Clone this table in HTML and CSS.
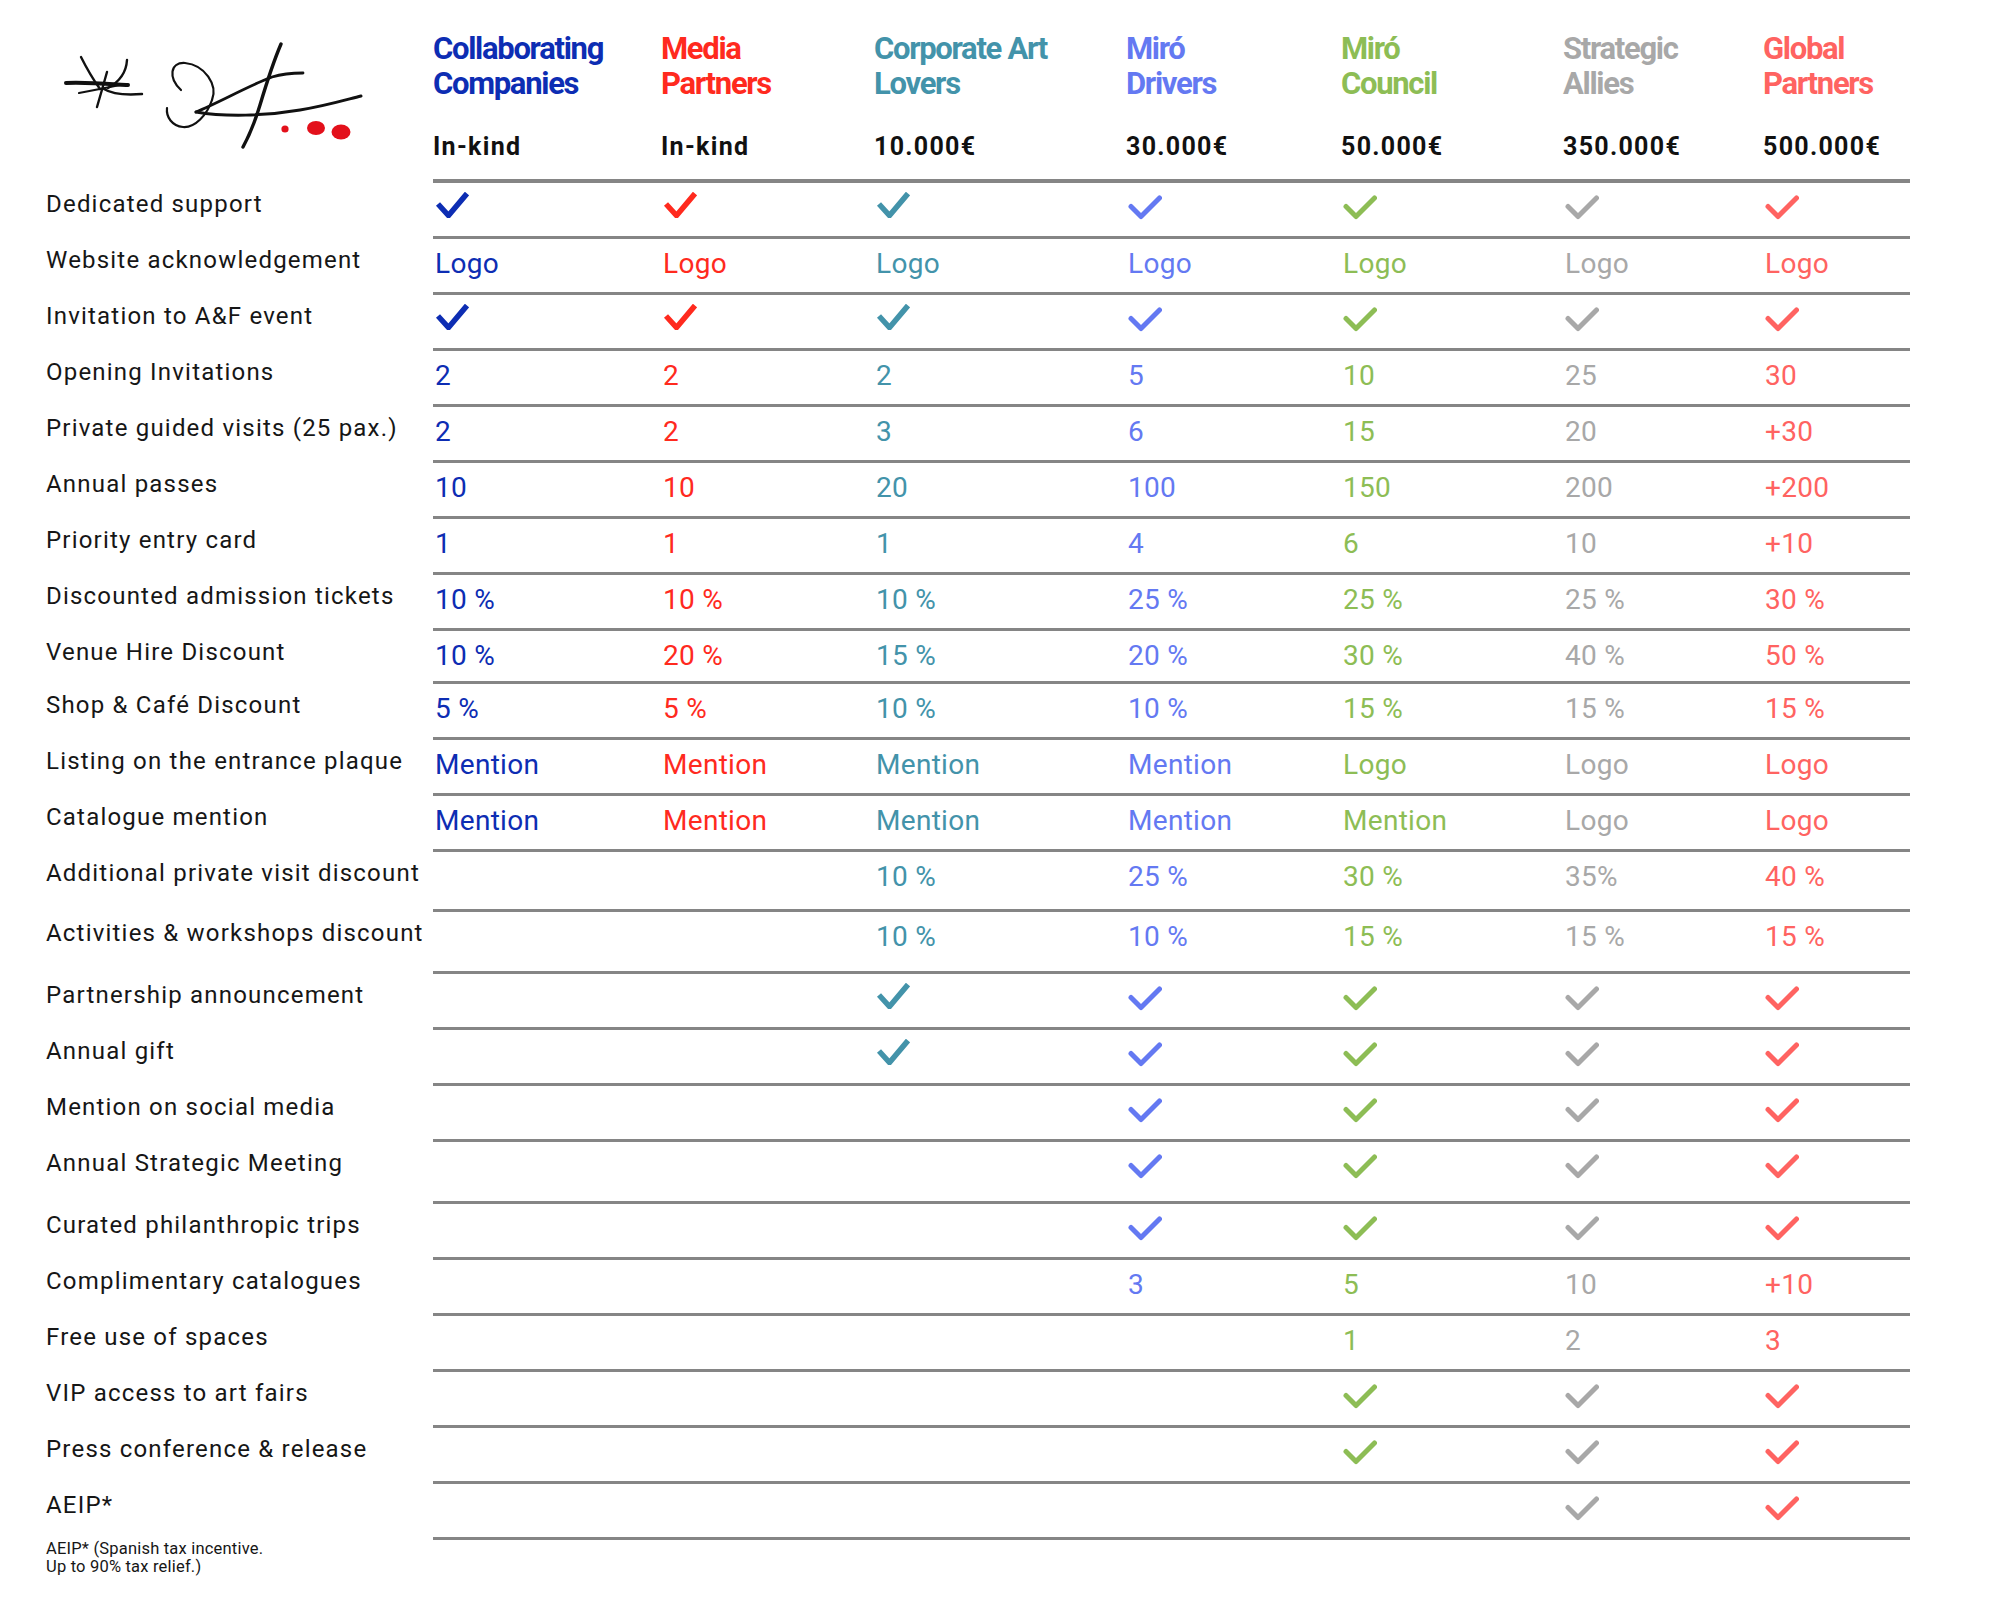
FILE: index.html
```html
<!DOCTYPE html>
<html lang="en">
<head>
<meta charset="utf-8">
<title>Partnership tiers</title>
<link rel="stylesheet" href="styles.css">
</head>
<body>
<svg class="sprite" xmlns="http://www.w3.org/2000/svg">
  <symbol id="chk-a" viewBox="0 0 34 26"><path d="M3 12 L13.5 23.5 L32 1.5"/></symbol>
  <symbol id="chk-b" viewBox="0 0 34 26"><path d="M3 12.5 L13 22.5 L31.5 4"/></symbol>
</svg>
<main class="sheet">
  <header class="head">
    <div class="brand">
      <svg class="brand__mark" width="330" height="130" viewBox="50 30 330 130" xmlns="http://www.w3.org/2000/svg">
        <g fill="none" stroke="#111" stroke-linecap="round">
          <path d="M66 83 C 85 82, 110 84, 128 85" stroke-width="4"/>
          <path d="M79 93 Q 100 89, 125 84" stroke-width="2.2"/>
          <path d="M81 57 Q 90 75, 100 89" stroke-width="2.4"/>
          <path d="M127 60 Q 126 78, 108 88" stroke-width="2.4"/>
          <path d="M107 72 Q 102 90, 97 107" stroke-width="2.4"/>
          <path d="M104 89 Q 115 96, 142 94" stroke-width="2.4"/>
          <path d="M181 90 C 168 78, 170 62, 185 63 C 205 65, 218 85, 212 100 C 207 115, 195 128, 183 127 C 172 126, 166 117, 167 108" stroke-width="2.2"/>
          <path d="M196 112 C 220 102, 250 85, 272 77 C 285 73, 295 73, 303 73" stroke-width="2.8"/>
          <path d="M196 112 C 225 117, 265 116, 300 110 C 325 106, 345 100, 361 96" stroke-width="3"/>
          <path d="M281 44 C 272 65, 266 85, 260 105 C 254 125, 248 138, 243 147" stroke-width="3.4"/>
        </g>
        <g fill="#e3101b">
          <circle cx="285" cy="129" r="3.6"/>
          <ellipse cx="316" cy="128" rx="9" ry="7"/>
          <ellipse cx="341" cy="132" rx="9.5" ry="7.5"/>
        </g>
      </svg>
    </div>
    <div class="tiers">
      <div class="tier t1"><h2 class="tier__name">Collaborating<br>Companies</h2><p class="tier__price">In-kind</p></div>
      <div class="tier t2"><h2 class="tier__name">Media<br>Partners</h2><p class="tier__price">In-kind</p></div>
      <div class="tier t3"><h2 class="tier__name">Corporate Art<br>Lovers</h2><p class="tier__price">10.000€</p></div>
      <div class="tier t4"><h2 class="tier__name">Miró<br>Drivers</h2><p class="tier__price">30.000€</p></div>
      <div class="tier t5"><h2 class="tier__name">Miró<br>Council</h2><p class="tier__price">50.000€</p></div>
      <div class="tier t6"><h2 class="tier__name">Strategic<br>Allies</h2><p class="tier__price">350.000€</p></div>
      <div class="tier t7"><h2 class="tier__name">Global<br>Partners</h2><p class="tier__price">500.000€</p></div>
    </div>
  </header>

  <section class="table">
    <div class="row">
      <div class="row__label">Dedicated support</div>
      <div class="row__cells">
        <div class="cell t1"><svg class="check check--a"><use href="#chk-a"/></svg></div>
        <div class="cell t2"><svg class="check check--a"><use href="#chk-a"/></svg></div>
        <div class="cell t3"><svg class="check check--a"><use href="#chk-a"/></svg></div>
        <div class="cell t4"><svg class="check"><use href="#chk-b"/></svg></div>
        <div class="cell t5"><svg class="check"><use href="#chk-b"/></svg></div>
        <div class="cell t6"><svg class="check"><use href="#chk-b"/></svg></div>
        <div class="cell t7"><svg class="check"><use href="#chk-b"/></svg></div>
      </div>
    </div>
    <div class="row">
      <div class="row__label">Website acknowledgement</div>
      <div class="row__cells">
        <div class="cell t1">Logo</div><div class="cell t2">Logo</div><div class="cell t3">Logo</div><div class="cell t4">Logo</div><div class="cell t5">Logo</div><div class="cell t6">Logo</div><div class="cell t7">Logo</div>
      </div>
    </div>
    <div class="row">
      <div class="row__label">Invitation to A&amp;F event</div>
      <div class="row__cells">
        <div class="cell t1"><svg class="check check--a"><use href="#chk-a"/></svg></div>
        <div class="cell t2"><svg class="check check--a"><use href="#chk-a"/></svg></div>
        <div class="cell t3"><svg class="check check--a"><use href="#chk-a"/></svg></div>
        <div class="cell t4"><svg class="check"><use href="#chk-b"/></svg></div>
        <div class="cell t5"><svg class="check"><use href="#chk-b"/></svg></div>
        <div class="cell t6"><svg class="check"><use href="#chk-b"/></svg></div>
        <div class="cell t7"><svg class="check"><use href="#chk-b"/></svg></div>
      </div>
    </div>
    <div class="row">
      <div class="row__label">Opening Invitations</div>
      <div class="row__cells">
        <div class="cell t1">2</div><div class="cell t2">2</div><div class="cell t3">2</div><div class="cell t4">5</div><div class="cell t5">10</div><div class="cell t6">25</div><div class="cell t7">30</div>
      </div>
    </div>
    <div class="row">
      <div class="row__label">Private guided visits (25 pax.)</div>
      <div class="row__cells">
        <div class="cell t1">2</div><div class="cell t2">2</div><div class="cell t3">3</div><div class="cell t4">6</div><div class="cell t5">15</div><div class="cell t6">20</div><div class="cell t7">+30</div>
      </div>
    </div>
    <div class="row">
      <div class="row__label">Annual passes</div>
      <div class="row__cells">
        <div class="cell t1">10</div><div class="cell t2">10</div><div class="cell t3">20</div><div class="cell t4">100</div><div class="cell t5">150</div><div class="cell t6">200</div><div class="cell t7">+200</div>
      </div>
    </div>
    <div class="row">
      <div class="row__label">Priority entry card</div>
      <div class="row__cells">
        <div class="cell t1">1</div><div class="cell t2">1</div><div class="cell t3">1</div><div class="cell t4">4</div><div class="cell t5">6</div><div class="cell t6">10</div><div class="cell t7">+10</div>
      </div>
    </div>
    <div class="row">
      <div class="row__label">Discounted admission tickets</div>
      <div class="row__cells">
        <div class="cell t1">10 %</div><div class="cell t2">10 %</div><div class="cell t3">10 %</div><div class="cell t4">25 %</div><div class="cell t5">25 %</div><div class="cell t6">25 %</div><div class="cell t7">30 %</div>
      </div>
    </div>
    <div class="row row--short">
      <div class="row__label">Venue Hire Discount</div>
      <div class="row__cells">
        <div class="cell t1">10 %</div><div class="cell t2">20 %</div><div class="cell t3">15 %</div><div class="cell t4">20 %</div><div class="cell t5">30 %</div><div class="cell t6">40 %</div><div class="cell t7">50 %</div>
      </div>
    </div>
    <div class="row">
      <div class="row__label">Shop &amp; Café Discount</div>
      <div class="row__cells">
        <div class="cell t1">5 %</div><div class="cell t2">5 %</div><div class="cell t3">10 %</div><div class="cell t4">10 %</div><div class="cell t5">15 %</div><div class="cell t6">15 %</div><div class="cell t7">15 %</div>
      </div>
    </div>
    <div class="row">
      <div class="row__label">Listing on the entrance plaque</div>
      <div class="row__cells">
        <div class="cell t1">Mention</div><div class="cell t2">Mention</div><div class="cell t3">Mention</div><div class="cell t4">Mention</div><div class="cell t5">Logo</div><div class="cell t6">Logo</div><div class="cell t7">Logo</div>
      </div>
    </div>
    <div class="row">
      <div class="row__label">Catalogue mention</div>
      <div class="row__cells">
        <div class="cell t1">Mention</div><div class="cell t2">Mention</div><div class="cell t3">Mention</div><div class="cell t4">Mention</div><div class="cell t5">Mention</div><div class="cell t6">Logo</div><div class="cell t7">Logo</div>
      </div>
    </div>
    <div class="row row--mid">
      <div class="row__label">Additional private visit discount</div>
      <div class="row__cells">
        <div class="cell t1"></div><div class="cell t2"></div><div class="cell t3">10 %</div><div class="cell t4">25 %</div><div class="cell t5">30 %</div><div class="cell t6">35%</div><div class="cell t7">40 %</div>
      </div>
    </div>
    <div class="row row--tall">
      <div class="row__label">Activities &amp; workshops discount</div>
      <div class="row__cells">
        <div class="cell t1"></div><div class="cell t2"></div><div class="cell t3">10 %</div><div class="cell t4">10 %</div><div class="cell t5">15 %</div><div class="cell t6">15 %</div><div class="cell t7">15 %</div>
      </div>
    </div>
    <div class="row">
      <div class="row__label">Partnership announcement</div>
      <div class="row__cells">
        <div class="cell t1"></div><div class="cell t2"></div>
        <div class="cell t3"><svg class="check check--a"><use href="#chk-a"/></svg></div>
        <div class="cell t4"><svg class="check"><use href="#chk-b"/></svg></div>
        <div class="cell t5"><svg class="check"><use href="#chk-b"/></svg></div>
        <div class="cell t6"><svg class="check"><use href="#chk-b"/></svg></div>
        <div class="cell t7"><svg class="check"><use href="#chk-b"/></svg></div>
      </div>
    </div>
    <div class="row">
      <div class="row__label">Annual gift</div>
      <div class="row__cells">
        <div class="cell t1"></div><div class="cell t2"></div>
        <div class="cell t3"><svg class="check check--a"><use href="#chk-a"/></svg></div>
        <div class="cell t4"><svg class="check"><use href="#chk-b"/></svg></div>
        <div class="cell t5"><svg class="check"><use href="#chk-b"/></svg></div>
        <div class="cell t6"><svg class="check"><use href="#chk-b"/></svg></div>
        <div class="cell t7"><svg class="check"><use href="#chk-b"/></svg></div>
      </div>
    </div>
    <div class="row">
      <div class="row__label">Mention on social media</div>
      <div class="row__cells">
        <div class="cell t1"></div><div class="cell t2"></div><div class="cell t3"></div>
        <div class="cell t4"><svg class="check"><use href="#chk-b"/></svg></div>
        <div class="cell t5"><svg class="check"><use href="#chk-b"/></svg></div>
        <div class="cell t6"><svg class="check"><use href="#chk-b"/></svg></div>
        <div class="cell t7"><svg class="check"><use href="#chk-b"/></svg></div>
      </div>
    </div>
    <div class="row row--tall">
      <div class="row__label">Annual Strategic Meeting</div>
      <div class="row__cells">
        <div class="cell t1"></div><div class="cell t2"></div><div class="cell t3"></div>
        <div class="cell t4"><svg class="check"><use href="#chk-b"/></svg></div>
        <div class="cell t5"><svg class="check"><use href="#chk-b"/></svg></div>
        <div class="cell t6"><svg class="check"><use href="#chk-b"/></svg></div>
        <div class="cell t7"><svg class="check"><use href="#chk-b"/></svg></div>
      </div>
    </div>
    <div class="row">
      <div class="row__label">Curated philanthropic trips</div>
      <div class="row__cells">
        <div class="cell t1"></div><div class="cell t2"></div><div class="cell t3"></div>
        <div class="cell t4"><svg class="check"><use href="#chk-b"/></svg></div>
        <div class="cell t5"><svg class="check"><use href="#chk-b"/></svg></div>
        <div class="cell t6"><svg class="check"><use href="#chk-b"/></svg></div>
        <div class="cell t7"><svg class="check"><use href="#chk-b"/></svg></div>
      </div>
    </div>
    <div class="row">
      <div class="row__label">Complimentary catalogues</div>
      <div class="row__cells">
        <div class="cell t1"></div><div class="cell t2"></div><div class="cell t3"></div><div class="cell t4">3</div><div class="cell t5">5</div><div class="cell t6">10</div><div class="cell t7">+10</div>
      </div>
    </div>
    <div class="row">
      <div class="row__label">Free use of spaces</div>
      <div class="row__cells">
        <div class="cell t1"></div><div class="cell t2"></div><div class="cell t3"></div><div class="cell t4"></div><div class="cell t5">1</div><div class="cell t6">2</div><div class="cell t7">3</div>
      </div>
    </div>
    <div class="row">
      <div class="row__label">VIP access to art fairs</div>
      <div class="row__cells">
        <div class="cell t1"></div><div class="cell t2"></div><div class="cell t3"></div><div class="cell t4"></div>
        <div class="cell t5"><svg class="check"><use href="#chk-b"/></svg></div>
        <div class="cell t6"><svg class="check"><use href="#chk-b"/></svg></div>
        <div class="cell t7"><svg class="check"><use href="#chk-b"/></svg></div>
      </div>
    </div>
    <div class="row">
      <div class="row__label">Press conference &amp; release</div>
      <div class="row__cells">
        <div class="cell t1"></div><div class="cell t2"></div><div class="cell t3"></div><div class="cell t4"></div>
        <div class="cell t5"><svg class="check"><use href="#chk-b"/></svg></div>
        <div class="cell t6"><svg class="check"><use href="#chk-b"/></svg></div>
        <div class="cell t7"><svg class="check"><use href="#chk-b"/></svg></div>
      </div>
    </div>
    <div class="row">
      <div class="row__label">AEIP*</div>
      <div class="row__cells">
        <div class="cell t1"></div><div class="cell t2"></div><div class="cell t3"></div><div class="cell t4"></div><div class="cell t5"></div>
        <div class="cell t6"><svg class="check"><use href="#chk-b"/></svg></div>
        <div class="cell t7"><svg class="check"><use href="#chk-b"/></svg></div>
      </div>
    </div>
  </section>

  <p class="note">AEIP* (Spanish tax incentive.<br>Up to 90% tax relief.)</p>
</main>
</body>
</html>
```

FILE: styles.css
```css
* {
  box-sizing: border-box;
}

body {
  margin: 0;
  background: #ffffff;
  color: #151515;
  font-family: Roboto, "Liberation Sans", Arial, sans-serif;
}

.sprite {
  display: none;
}

.sheet {
  width: 1910px;
  padding: 30px 0 0 46px;
}

/* ---------- header ---------- */
.head {
  display: grid;
  grid-template-columns: 387px 1477px;
}

.brand__mark {
  display: block;
  margin-left: 4px;
}

.tiers {
  display: grid;
  grid-template-columns: 228px 213px 252px 215px 222px 200px 147px;
  padding: 1px 0 17px;
  border-bottom: 4px solid #858585;
}

.tier__name {
  margin: 0;
  font-size: 31px;
  line-height: 35px;
  font-weight: 700;
  letter-spacing: -1.3px;
}

.tier__price {
  margin: 31px 0 0;
  font-size: 25px;
  line-height: 30px;
  font-weight: 700;
  letter-spacing: 1.3px;
  color: #111111;
}

/* ---------- rows ---------- */
.row {
  display: grid;
  grid-template-columns: 387px 1477px;
  height: 56px;
}

.row--short {
  height: 53px;
}

.row--mid {
  height: 60px;
}

.row--tall {
  height: 62px;
}

.row__label {
  padding-top: 6px;
  font-size: 24px;
  line-height: 30px;
  letter-spacing: 1.2px;
  white-space: nowrap;
  color: #161616;
}

.row__cells {
  display: grid;
  grid-template-columns: 228px 213px 252px 215px 222px 200px 147px;
  border-bottom: 3px solid #858585;
}

.cell {
  padding: 8px 0 0 2px;
  font-size: 28px;
  line-height: 34px;
  letter-spacing: 0.3px;
  white-space: nowrap;
}

.check {
  display: block;
  width: 34px;
  height: 26px;
  margin-top: 3px;
  fill: none;
  stroke: currentColor;
  stroke-width: 5;
  stroke-linecap: round;
  stroke-linejoin: round;
}

.check--a {
  margin-top: 1px;
  stroke-width: 5.5;
  stroke-linecap: butt;
  stroke-linejoin: miter;
}

/* ---------- tier colours ---------- */
.t1 { color: #0d2db3; }
.t2 { color: #ff2a1e; }
.t3 { color: #4393aa; }
.t4 { color: #6479f2; }
.t5 { color: #8dbd55; }
.t6 { color: #a8a8a8; }
.t7 { color: #ff6361; }

.tier__price {
  color: #111111;
}

/* ---------- footnote ---------- */
.note {
  margin: 0;
  font-size: 16.5px;
  line-height: 18px;
  letter-spacing: 0.2px;
  color: #161616;
}
```
